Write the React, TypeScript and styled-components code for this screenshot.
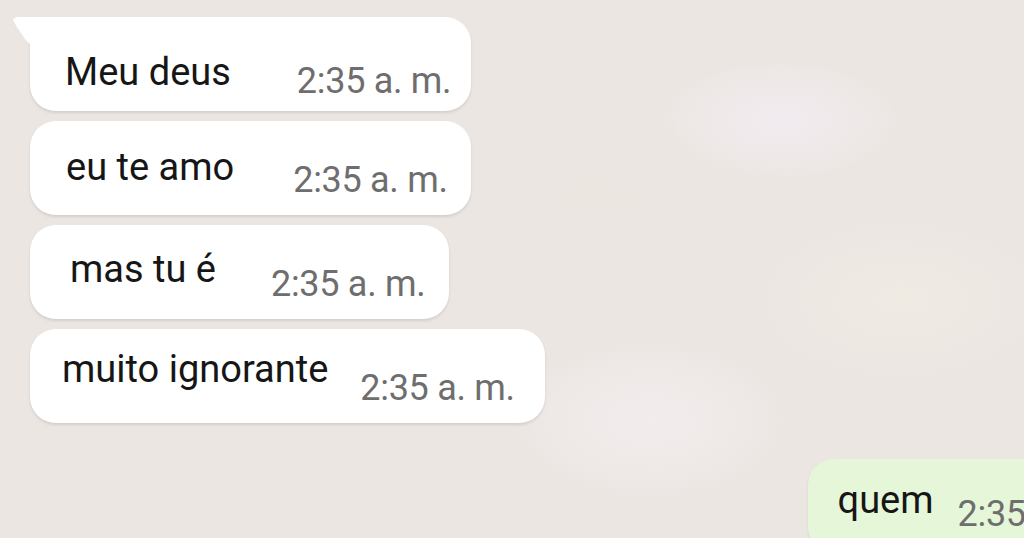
import React from "react";
import styled, { createGlobalStyle } from "styled-components";

const Global = createGlobalStyle`
  html, body {
    margin: 0;
    padding: 0;
    background: #ece6e3;
  }
  body {
    font-family: Roboto, "Noto Sans", "Liberation Sans", sans-serif;
  }
`;

const Screen = styled.div`
  width: 1024px;
  height: 538px;
  overflow: hidden;
  box-sizing: border-box;
  padding: 17px 0 0 30px;
  display: flex;
  flex-direction: column;
  background-color: #ece6e3;
  background-image:
    radial-gradient(ellipse 120px 60px at 780px 120px, rgba(244, 238, 246, 0.7), transparent),
    radial-gradient(ellipse 160px 90px at 900px 300px, rgba(240, 236, 226, 0.7), transparent),
    radial-gradient(ellipse 140px 80px at 650px 420px, rgba(246, 240, 244, 0.6), transparent),
    radial-gradient(ellipse 200px 100px at 600px 200px, rgba(236, 230, 224, 0.6), transparent);
`;

const Group = styled.div`
  display: flex;
  flex-direction: column;
  align-items: flex-start;
  gap: 10px;
`;

const Bubble = styled.div<{ $tail?: boolean; $padL: number; $padR: number }>`
  position: relative;
  height: 94px;
  box-sizing: border-box;
  display: flex;
  align-items: flex-start;
  padding: 0 ${(p) => p.$padR}px 0 ${(p) => p.$padL}px;
  background: #ffffff;
  border-radius: 26px;
  ${(p) => (p.$tail ? "border-top-left-radius: 0;" : "")}
  box-shadow: 0 2px 3px rgba(0, 0, 0, 0.1);

  &::before {
    content: "";
    display: ${(p) => (p.$tail ? "block" : "none")};
    position: absolute;
    left: -18px;
    top: 0;
    width: 19px;
    height: 28px;
    background: #ffffff;
    clip-path: polygon(0 0, 100% 0, 100% 100%, 70% 80%, 25% 35%, 4% 10%);
    border-top-left-radius: 6px;
  }
`;

const Message = styled.span<{ $top: number }>`
  font-size: 38px;
  line-height: 38px;
  color: #161616;
  margin-top: ${(p) => p.$top}px;
  white-space: nowrap;
`;

const Time = styled.span<{ $top: number; $gap: number }>`
  font-size: 36px;
  line-height: 36px;
  color: #6e6e6e;
  margin-top: ${(p) => p.$top}px;
  margin-left: ${(p) => p.$gap}px;
  white-space: nowrap;
  letter-spacing: -0.3px;
`;

const OutRow = styled.div`
  display: flex;
  justify-content: flex-end;
  margin-top: 36px;
  margin-right: -108px;
`;

const OutBubble = styled.div`
  height: 94px;
  box-sizing: border-box;
  display: flex;
  align-items: flex-start;
  padding: 0 20px 0 30px;
  background: #e5f7d8;
  border-radius: 26px;
  box-shadow: 0 2px 3px rgba(0, 0, 0, 0.08);
`;

type Msg = { text: string; padL: number; padR: number; gap: number; mt: number; tt: number; tail?: boolean };

const incoming: Msg[] = [
  { text: "Meu deus", padL: 35, padR: 20, gap: 66, mt: 36, tt: 46, tail: true },
  { text: "eu te amo", padL: 36, padR: 23, gap: 59, mt: 27, tt: 41 },
  { text: "mas tu é", padL: 40, padR: 24, gap: 55, mt: 25, tt: 41 },
  { text: "muito ignorante", padL: 32, padR: 30, gap: 32, mt: 21, tt: 41 },
];

export default function App() {
  return (
    <>
      <Global />
      <Screen>
        <Group>
          {incoming.map((m) => (
            <Bubble key={m.text} $tail={m.tail} $padL={m.padL} $padR={m.padR}>
              <Message $top={m.mt}>{m.text}</Message>
              <Time $top={m.tt} $gap={m.gap}>
                2:35 a. m.
              </Time>
            </Bubble>
          ))}
        </Group>
        <OutRow>
          <OutBubble>
            <Message $top={22}>quem</Message>
            <Time $top={37} $gap={24}>
              2:35 a. m.
            </Time>
          </OutBubble>
        </OutRow>
      </Screen>
    </>
  );
}
